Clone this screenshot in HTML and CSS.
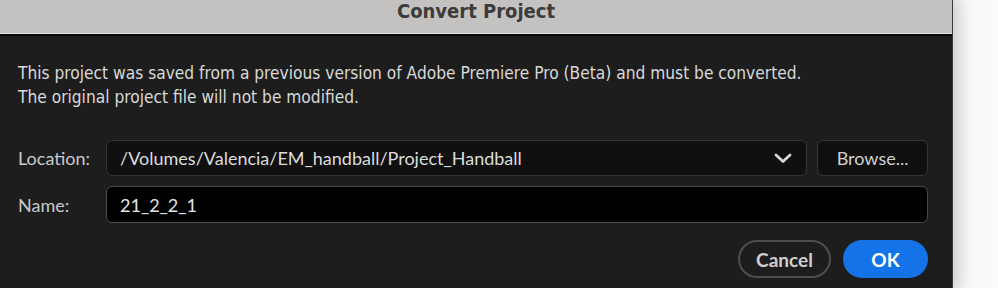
FILE: index.html
```html
<!DOCTYPE html>
<html>
<head>
<meta charset="utf-8">
<link rel="stylesheet" href="styles.css">
</head>
<body>
<div class="page">
  <div class="dialog">
    <div class="titlebar">Convert Project</div>
    <div class="content">
      <p class="message">This project was saved from a previous version of Adobe Premiere Pro (Beta) and must be converted.<br>The original project file will not be modified.</p>
      <div class="form">
        <div class="row">
          <span class="label">Location:</span>
          <div class="select">
            <span class="value">/Volumes/Valencia/EM_handball/Project_Handball</span>
            <svg class="chev" width="18" height="12" viewBox="0 0 18 12"><path d="M2 3 L9 9.5 L16 3" fill="none" stroke="#d6d6d6" stroke-width="2.8" stroke-linecap="round" stroke-linejoin="round"/></svg>
          </div>
          <div class="browse">Browse...</div>
        </div>
        <div class="row">
          <span class="label">Name:</span>
          <div class="input"><span class="value">21_2_2_1</span></div>
        </div>
      </div>
      <div class="actions">
        <div class="btn cancel">Cancel</div>
        <div class="btn ok">OK</div>
      </div>
    </div>
  </div>
  <div class="backdrop"></div>
</div>
</body>
</html>
```
FILE: styles.css
```css
html, body {
  margin: 0;
  padding: 0;
  background: #f4f4f4;
}
.page {
  display: flex;
  width: 998px;
  height: 288px;
  overflow: hidden;
}
.dialog {
  width: 953px;
  flex: none;
  background: #1d1d1d;
  border-right: 1px solid #3a3a3a;
  box-sizing: border-box;
  display: flex;
  flex-direction: column;
  box-shadow: 6px 0 14px rgba(0,0,0,0.12);
  position: relative;
  z-index: 1;
}
.backdrop {
  flex: 1;
  background: linear-gradient(90deg, #ececec 0%, #f7f7f7 40%, #fbfbfb 100%);
}
.titlebar {
  height: 36px;
  flex: none;
  background: #c3c2c0;
  border-bottom: 2px solid #0a0a0a;
  box-shadow: inset 0 -1px 0 #e2e2e2;
  display: flex;
  align-items: center;
  justify-content: center;
  font-family: "DejaVu Sans Condensed", "DejaVu Sans", sans-serif;
  font-weight: bold;
  font-size: 20px;
  color: #3b3b3b;
  padding-bottom: 12px;
  box-sizing: border-box;
}
.content {
  padding: 0 24px 0 18px;
  flex: 1;
  display: flex;
  flex-direction: column;
}
.message {
  margin: 25px 0 0 0;
  font-family: "DejaVu Sans Condensed", "DejaVu Sans", sans-serif;
  font-size: 17.2px;
  line-height: 24px;
  color: #d9d9d9;
}
.form {
  margin-top: 31px;
  display: flex;
  flex-direction: column;
  gap: 10px;
}
.row {
  display: flex;
  align-items: center;
  height: 36px;
}
.row + .row {
  height: 37px;
}
.row + .row .input {
  height: 37px;
}
.label {
  width: 88px;
  flex: none;
  font-family: "Lato", sans-serif;
  font-size: 18px;
  color: #c9c9c9;
}
.select, .input, .browse {
  box-sizing: border-box;
  height: 36px;
  border-radius: 6px;
  display: flex;
  align-items: center;
  font-family: "Lato", sans-serif;
  font-size: 18px;
  color: #dcdcdc;
}
.select {
  width: 702px;
  background: #101010;
  border: 1.5px solid #353535;
  padding: 0 14px 0 13px;
  justify-content: space-between;
}
.browse {
  margin-left: 10px;
  width: 111px;
  background: #101010;
  border: 1.5px solid #353535;
  justify-content: center;
  color: #d0d0d0;
}
.input {
  width: 823px;
  background: #000;
  border: 1.5px solid #4a4a4a;
  padding: 0 13px;
  color: #e4e4e4;
}
.actions {
  margin-top: 17px;
  display: flex;
  justify-content: flex-end;
  gap: 12px;
}
.btn {
  box-sizing: border-box;
  height: 38px;
  border-radius: 19px;
  display: flex;
  align-items: center;
  justify-content: center;
  font-family: "Lato", sans-serif;
  font-weight: bold;
  font-size: 19px;
}
.cancel {
  width: 93px;
  border: 2px solid #4e4e4e;
  color: #cfcfcf;
}
.ok {
  width: 85px;
  background: #1473e6;
  color: #ffffff;
}
```
